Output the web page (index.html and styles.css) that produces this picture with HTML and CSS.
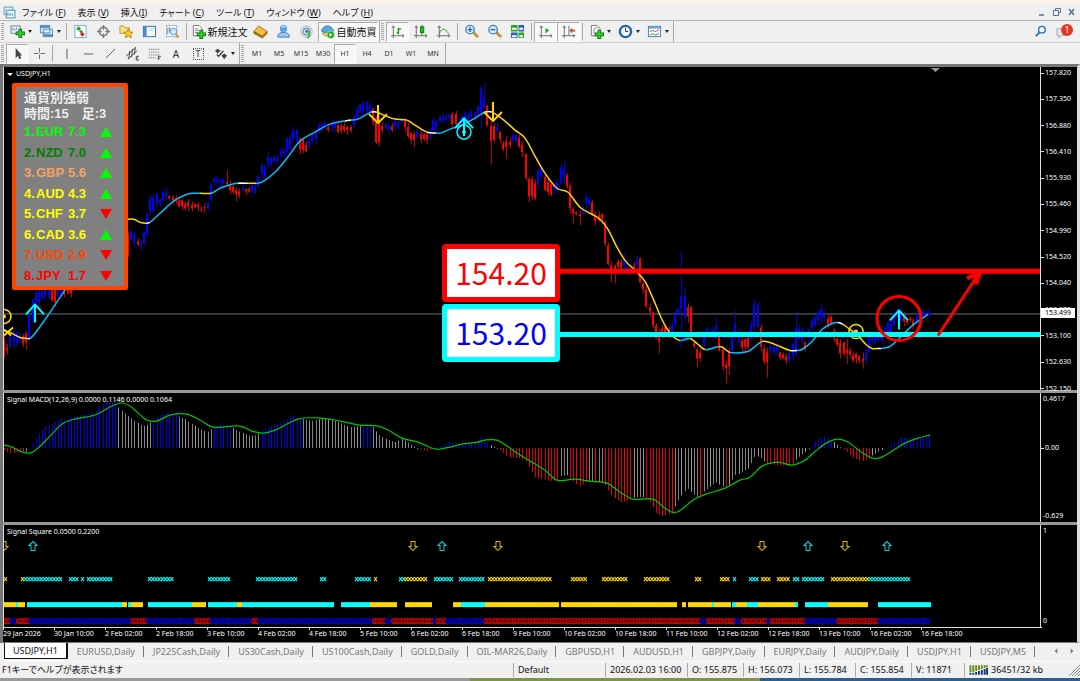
FILE: index.html
```
<!DOCTYPE html>
<html lang="ja">
<head>
    <meta charset="UTF-8">
    <meta name="viewport" content="width=device-width, initial-scale=1.0">
    <link rel="stylesheet" href="styles.css">
    <title>USDJPY,H1</title>
</head>
<body>

    <!-- Menu -->
    <header class="menubar">
        <svg class="app-icon" viewBox="0 0 12 12"><rect x="1" y="1" width="8" height="7" fill="#d8ecf8" stroke="#6fa8cc"/><rect x="3" y="4" width="8" height="7" fill="#eef7fc" stroke="#5b9bc4"/><path d="M4.500 9V6M6.500 9V6.500M8.500 9V7" stroke="#4a8fc0"/></svg>
        <nav class="menu">
            <button>ファイル (<u>F</u>)</button>
            <button>表示 (<u>V</u>)</button>
            <button>挿入(<u>I</u>)</button>
            <button>チャート (<u>C</u>)</button>
            <button>ツール (<u>T</u>)</button>
            <button>ウィンドウ (<u>W</u>)</button>
            <button>ヘルプ (<u>H</u>)</button>
        </nav>
        <div class="window-buttons">
            <button aria-label="Minimize"><svg viewBox="0 0 10 10"><path d="M2 8h5" stroke="#55708c" stroke-width="1.500"/></svg></button>
            <button aria-label="Restore"><svg viewBox="0 0 10 10"><path d="M3.500 3.500v-2h5v4h-2M1.500 3.500h5v5h-5z" fill="none" stroke="#55708c"/></svg></button>
            <button aria-label="Close"><svg viewBox="0 0 10 10"><path d="M2 2l5 6M7 2L2 8" stroke="#55708c" stroke-width="1.500"/></svg></button>
        </div>
    </header>

    <!-- Standard toolbar -->
    <div class="toolbar-row">
        <div class="toolbar standard">
            <i class="grip"></i>
            <button class="tool drop" aria-label="New chart"><svg viewBox="0 0 16 16"><path d="M1 2h10v8H1z" fill="#e6f1f9" stroke="#6285a3"/><path d="M3 7V4M5 7V5M7 6V4" stroke="#6285a3"/><path d="M6 10h10M11 5v10" stroke="#0b7a0b" stroke-width="4"/><path d="M7 10h8M11 6v8" stroke="#35d035" stroke-width="2"/></svg></button>
            <button class="tool drop" aria-label="Profiles"><svg viewBox="0 0 16 16"><path d="M1.500 1.500h10v8h-10zM4.500 5.500h10v8h-10z" fill="#dcebf6" stroke="#4b86b4"/><path d="M1.500 3h10M4.500 12h10" stroke="#4b86b4" stroke-width="2"/></svg></button>
            <i class="sep"></i>
            <button class="tool" aria-label="Market watch"><svg viewBox="0 0 16 16"><rect x="2" y="1.500" width="12" height="13" fill="#fff" stroke="#6faede"/><path d="M3.500 5l2.500-2.500 2.500 2.500-2.500 2.500z" fill="#17a317"/><path d="M6.500 8l2-2 2 2-2 2z" fill="#17a317"/><path d="M7.500 11l2.500-2.500 2.500 2.500-2.500 2.500z" fill="#e02020"/></svg></button>
            <button class="tool" aria-label="Data window"><svg viewBox="0 0 16 16"><circle cx="8" cy="8" r="4.500" fill="none" stroke="#777" stroke-width="1.500"/><path d="M8 1v5M8 10v5M1 8h5M10 8h5" stroke="#777" stroke-width="1.500"/></svg></button>
            <button class="tool" aria-label="Navigator"><svg viewBox="0 0 16 16"><path d="M1 2h4l1 2h5v6H1z" fill="#f8e08a" stroke="#c69a2e"/><path d="M10 5l1.500 3.500 3.500.3-2.700 2.400.9 3.600-3.200-2-3.200 2 .9-3.600L5 8.800l3.500-.3z" fill="#ffc928" stroke="#b98112"/></svg></button>
            <button class="tool" aria-label="Terminal"><svg viewBox="0 0 16 16"><rect x="1.500" y="2.500" width="13" height="11" fill="#f4fafe" stroke="#2f6ea5"/><path d="M2 3h3v10H2z" fill="#4a8fc9"/><path d="M7 5h6M7 7h5" stroke="#b8d4ea"/></svg></button>
            <button class="tool" aria-label="Strategy tester"><svg viewBox="0 0 16 16"><rect x="1.500" y="1.500" width="11" height="12" fill="#fff" stroke="#9ab4ca"/><path d="M3 4v7M5 3v6" stroke="#4b7da8"/><circle cx="9" cy="8" r="3.500" fill="#cfe7f8" stroke="#5592c4"/><path d="M11.500 11l3 3.500" stroke="#c99322" stroke-width="2"/></svg></button>
            <i class="sep"></i>
            <button class="tool text"><svg viewBox="0 0 16 16"><path d="M2.500 1.500h6l3 3v8h-9z" fill="#fff" stroke="#777"/><path d="M4 5h4M4 7h5M4 9h3" stroke="#888"/><path d="M6 11h10M11 6v10" stroke="#0b7a0b" stroke-width="4"/><path d="M7 11h8M11 7v8" stroke="#35d035" stroke-width="2"/></svg>新規注文</button>
            <button class="tool" aria-label="MetaEditor"><svg viewBox="0 0 16 16"><path d="M1 8l5-6 9 6-5 6z" fill="#f2c148" stroke="#a87213"/><path d="M1 8v2l9 5 5-5V8l-5 5z" fill="#c98a1d" stroke="#8c5c0c"/></svg></button>
            <button class="tool" aria-label="Options"><svg viewBox="0 0 16 16"><circle cx="8" cy="5" r="3.500" fill="#d5eafa" stroke="#4c8ed0"/><path d="M2 12c1-4 11-4 12 0v2H2z" fill="#9cc8ec" stroke="#3579bd"/><path d="M5 3.500h6v4H5z" fill="#5ea3e0"/></svg></button>
            <button class="tool" aria-label="Signals"><svg viewBox="0 0 16 16"><circle cx="8" cy="8" r="6" fill="#e4eef4" stroke="#9bb4c4"/><circle cx="8" cy="8" r="3.500" fill="none" stroke="#6c9cc0" stroke-width="1.500"/><path d="M8 7c4 1 4 6 1 8" fill="none" stroke="#4caf3e" stroke-width="2"/><circle cx="8" cy="8" r="1.500" fill="#4673a0"/></svg></button>
            <button class="tool text on"><svg viewBox="0 0 16 16"><path d="M3 7h10v4l-4 3-6-3z" fill="#f3cf63" stroke="#b98a22"/><path d="M1 7c2-1 2-5 7-5s5 4 7 5c-3 3-11 3-14 0z" fill="#56a9dc" stroke="#3679a8"/><circle cx="11.500" cy="11.500" r="4" fill="#18ad18" stroke="#fff" stroke-width=".5"/><path d="M10 9.500v4l3.500-2z" fill="#fff"/></svg>自動売買</button>
        </div>
        <div class="toolbar standard">
            <i class="grip"></i>
            <button class="tool on" aria-label="Bar chart"><svg viewBox="0 0 16 16"><path d="M3.500 2v13M1 12.500h14M2 4l1.500-2L5 4M13 11l2 1.500-2 1.500" fill="none" stroke="#666"/><path d="M9 11V4M7 9.500h2M9 5.500h3" stroke="#159915" stroke-width="1.500" fill="none"/></svg></button>
            <button class="tool" aria-label="Candlesticks"><svg viewBox="0 0 16 16"><path d="M3.500 2v13M1 12.500h14M2 4l1.500-2L5 4M13 11l2 1.500-2 1.500" fill="none" stroke="#666"/><path d="M9.500 1v11" stroke="#087808"/><rect x="8" y="3" width="3.500" height="6" fill="#20c020" stroke="#087808"/></svg></button>
            <button class="tool" aria-label="Line chart"><svg viewBox="0 0 16 16"><path d="M3.500 2v13M1 12.500h14M2 4l1.500-2L5 4M13 11l2 1.500-2 1.500" fill="none" stroke="#666"/><path d="M3.500 10c3-6 5-6 10 0" fill="none" stroke="#159915"/></svg></button>
            <i class="sep"></i>
            <button class="tool" aria-label="Zoom in"><svg viewBox="0 0 16 16"><path d="M10 9l5 5" stroke="#c7932b" stroke-width="3"/><circle cx="6.500" cy="6" r="4.500" fill="#d8edfb" stroke="#4185bd" stroke-width="1.500"/><path d="M4 6h5M6.500 3.500v5" stroke="#2667a5" stroke-width="1.500"/></svg></button>
            <button class="tool" aria-label="Zoom out"><svg viewBox="0 0 16 16"><path d="M10 9l5 5" stroke="#c7932b" stroke-width="3"/><circle cx="6.500" cy="6" r="4.500" fill="#d8edfb" stroke="#4185bd" stroke-width="1.500"/><path d="M4 6h5" stroke="#2667a5" stroke-width="1.500"/></svg></button>
            <button class="tool" aria-label="Tile windows"><svg viewBox="0 0 16 16"><path d="M1 1h7v7H1zM9 9h6v6H9z" fill="#2aa51d"/><path d="M9 1h6v7H9zM1 9h7v6H1z" fill="#2c5fc4"/><path d="M2 4h5v2H2zM10 4h4v2h-4zM2 12h5v2H2zM10 12h4v2h-4z" fill="#fff"/></svg></button>
            <i class="sep"></i>
            <button class="tool on" aria-label="Auto scroll"><svg viewBox="0 0 16 16"><path d="M3.500 2v13M1 12.500h14M2 4l1.500-2L5 4M13 11l2 1.500-2 1.500" fill="none" stroke="#666"/><path d="M8 4v6l4-3z" fill="#1fae1f"/></svg></button>
            <button class="tool on" aria-label="Chart shift"><svg viewBox="0 0 16 16"><path d="M3.500 2v13M1 12.500h14M2 4l1.500-2L5 4M13 11l2 1.500-2 1.500" fill="none" stroke="#666"/><path d="M8.500 2v10" stroke="#3a6da0"/><path d="M9 7l3-3v2h3v2h-3v2z" fill="#d2491e"/></svg></button>
            <i class="sep"></i>
            <button class="tool drop" aria-label="Indicators"><svg viewBox="0 0 16 16"><path d="M2.500 1.500h6l3 3v8h-9z" fill="#fff" stroke="#777"/><path d="M5 10c0-6 1-6 4-6" fill="none" stroke="#777"/><path d="M6 11h10M11 6v10" stroke="#0b7a0b" stroke-width="4"/><path d="M7 11h8M11 7v8" stroke="#35d035" stroke-width="2"/></svg></button>
            <button class="tool drop" aria-label="Periods"><svg viewBox="0 0 16 16"><circle cx="8" cy="8" r="6" fill="#f4faff" stroke="#1e64b4" stroke-width="2.500"/><path d="M8 4v4h3" fill="none" stroke="#333"/></svg></button>
            <button class="tool drop" aria-label="Templates"><svg viewBox="0 0 16 16"><rect x="1.500" y="2.500" width="13" height="11" fill="#fff" stroke="#3d80b5"/><path d="M2 4h12" stroke="#6aaede" stroke-width="2"/><path d="M3 8l3-1 3 1 4-2" fill="none" stroke="#c0522a"/><path d="M3 12l3-2 3 2 4-2" fill="none" stroke="#23962b"/></svg></button>
        </div>
        <div class="right-tools">
            <button class="tool" aria-label="Search"><svg viewBox="0 0 16 16"><circle cx="9.500" cy="6" r="3.500" fill="#fff" stroke="#2b70b5" stroke-width="1.500"/><path d="M7 9l-4 4" stroke="#2b70b5" stroke-width="2"/></svg></button>
            <button class="tool notice" aria-label="Messages"><svg viewBox="0 0 16 16"><path d="M2 5h11v7H7l-3 3v-3H2z" fill="#e6e6e6" stroke="#aaa"/></svg><span class="badge">1</span></button>
        </div>
    </div>

    <!-- Line studies and periods -->
    <div class="toolbar-row">
        <div class="toolbar">
            <i class="grip"></i>
            <button class="tool on" aria-label="Cursor"><svg viewBox="0 0 16 16"><path d="M6 2v11l2.500-2.500L10 14l2-1-1.500-3H13z" fill="#444"/></svg></button>
            <button class="tool" aria-label="Crosshair"><svg viewBox="0 0 16 16"><path d="M8 2v5M8 9v5M2 8h5M9 8h5" stroke="#666"/></svg></button>
            <i class="sep"></i>
            <button class="tool" aria-label="Vertical line"><svg viewBox="0 0 16 16"><path d="M8.500 3v11" stroke="#555"/></svg></button>
            <button class="tool" aria-label="Horizontal line"><svg viewBox="0 0 16 16"><path d="M3 8.500h10" stroke="#555"/></svg></button>
            <button class="tool" aria-label="Trendline"><svg viewBox="0 0 16 16"><path d="M3 13L13 3" stroke="#555"/></svg></button>
            <button class="tool" aria-label="Channel"><svg viewBox="0 0 16 16"><path d="M1 11L11 2M3 14L13 5M5 5l-1 9M8 3l-1 9M11 1l-1 8" stroke="#444"/><path d="M15 11h-3v4h3M12 13h2" fill="none" stroke="#444"/></svg></button>
            <button class="tool" aria-label="Fibonacci"><svg viewBox="0 0 16 16"><path d="M2 3.500h12M2 6.500h12M2 9.500h12M2 12.500h8" stroke="#555" stroke-dasharray="1 1"/><path d="M12 15v-4h3M12 13h2" fill="none" stroke="#444"/></svg></button>
            <button class="tool letter">A</button>
            <button class="tool letter"><span class="boxed">T</span></button>
            <button class="tool drop" aria-label="Arrows"><svg viewBox="0 0 16 16"><path d="M2 5l3-2 3 2-3 3zM9 10l3-2 3 2-3 4z" fill="#444"/><path d="M4 9l2 2 5-6" fill="none" stroke="#444" stroke-width="1.500"/></svg></button>
        </div>
        <div class="toolbar periods">
            <i class="grip"></i>
            <button class="tool">M1</button>
            <button class="tool">M5</button>
            <button class="tool">M15</button>
            <button class="tool">M30</button>
            <button class="tool on">H1</button>
            <button class="tool">H4</button>
            <button class="tool">D1</button>
            <button class="tool">W1</button>
            <button class="tool">MN</button>
        </div>
    </div>

    <!-- Chart window -->
    <main class="chart">
        <section class="pane price">
            <div class="plot">
                <h1 class="pane-title"><i class="down"></i>USDJPY,H1</h1>
                <svg id="price" viewBox="4 67 1036 322" preserveAspectRatio="none"></svg>
                <div class="strength">
                    <p>通貨別強弱</p>
                    <p>時間:15　足:3</p>
                    <ol>
                        <li class="lime"><span>1.</span><span>EUR</span><span>7.3</span><i class="tri up"></i></li>
                        <li class="green"><span>2.</span><span>NZD</span><span>7.0</span><i class="tri up"></i></li>
                        <li class="sandy"><span>3.</span><span>GBP</span><span>5.6</span><i class="tri up"></i></li>
                        <li class="yellow"><span>4.</span><span>AUD</span><span>4.3</span><i class="tri up"></i></li>
                        <li class="yellow"><span>5.</span><span>CHF</span><span>3.7</span><i class="tri"></i></li>
                        <li class="yellow"><span>6.</span><span>CAD</span><span>3.6</span><i class="tri up"></i></li>
                        <li class="orange"><span>7.</span><span>USD</span><span>2.9</span><i class="tri"></i></li>
                        <li class="red"><span>8.</span><span>JPY</span><span>1.7</span><i class="tri"></i></li>
                    </ol>
                </div>
                <div class="levels">
                    <div class="level target">154.20</div>
                    <div class="level base">153.20</div>
                </div>
            </div>
            <div class="scale">
                <span>157.820</span><span>157.350</span><span>156.880</span><span>156.410</span><span>155.930</span><span>155.460</span><span>154.990</span><span>154.520</span><span>154.040</span><span>153.570</span><span>153.100</span><span>152.630</span><span>152.150</span>
                <b class="current">153.499</b>
            </div>
        </section>
        <section class="pane macd">
            <div class="plot">
                <h2 class="pane-title">Signal MACD(12,26,9) 0.0000 0.1146 0.0000 0.1064</h2>
                <svg id="macd" viewBox="4 392 1036 129" preserveAspectRatio="none"></svg>
            </div>
            <div class="scale"><span>0.4617</span><span class="zero">0.00</span><span>-0.629</span></div>
        </section>
        <section class="pane square">
            <div class="plot">
                <h2 class="pane-title">Signal Square 0.0500 0.2200</h2>
                <svg id="square" viewBox="4 524 1036 102" preserveAspectRatio="none"></svg>
            </div>
            <div class="scale"><span>1</span><span>0</span></div>
        </section>
        <ol class="dates">
            <li>29 Jan 2026</li><li>30 Jan 10:00</li><li>2 Feb 02:00</li><li>2 Feb 18:00</li><li>3 Feb 10:00</li><li>4 Feb 02:00</li><li>4 Feb 18:00</li><li>5 Feb 10:00</li><li>6 Feb 02:00</li><li>6 Feb 18:00</li><li>9 Feb 10:00</li><li>10 Feb 02:00</li><li>10 Feb 18:00</li><li>11 Feb 10:00</li><li>12 Feb 02:00</li><li>12 Feb 18:00</li><li>13 Feb 10:00</li><li>16 Feb 02:00</li><li>16 Feb 18:00</li>
        </ol>
    </main>

    <nav class="tabs">
        <a href="#" class="active">USDJPY,H1</a>
        <a href="#">EURUSD,Daily</a>
        <a href="#">JP225Cash,Daily</a>
        <a href="#">US30Cash,Daily</a>
        <a href="#">US100Cash,Daily</a>
        <a href="#">GOLD,Daily</a>
        <a href="#">OIL-MAR26,Daily</a>
        <a href="#">GBPUSD,H1</a>
        <a href="#">AUDUSD,H1</a>
        <a href="#">GBPJPY,Daily</a>
        <a href="#">EURJPY,Daily</a>
        <a href="#">AUDJPY,Daily</a>
        <a href="#">USDJPY,H1</a>
        <a href="#">USDJPY,M5</a>
        <span class="tab-scroll">
            <button aria-label="Previous tabs"><svg viewBox="0 0 6 6"><path d="M4 1v4L2 3z" fill="#777"/></svg></button>
            <button aria-label="Next tabs"><svg viewBox="0 0 6 6"><path d="M2 1v4l2-2z" fill="#777"/></svg></button>
        </span>
    </nav>

    <footer class="status">
        <span class="help">F1キーでヘルプが表示されます</span>
        <span class="profile">Default</span>
        <span class="time">2026.02.03 16:00</span>
        <span class="ohlc">O: 155.875</span>
        <span class="ohlc">H: 156.073</span>
        <span class="ohlc">L: 155.784</span>
        <span class="ohlc">C: 155.854</span>
        <span class="volume">V: 11871</span>
        <span class="traffic">
            <svg viewBox="0 0 20 12"><path d="M1.500 1v7M4.500 1v7M7.500 1v6M10.500 1v5M13.500 1v4M16.500 1v3M19 1v2" stroke="#6d8b1c" stroke-width="2"/><path d="M1.500 9v2M4.500 9v2M7.500 8v3M10.500 7v4M13.500 6v5M16.500 5v6M19 4v7" stroke="#123a6b" stroke-width="2"/></svg>
            36451/32 kb
        </span>
        <svg class="resize" viewBox="0 0 12 12"><path d="M1 12L12 1M4 12l8-8M7 12l5-5M10 12l2-2" stroke="#888"/></svg>
    </footer>
    <div class="desktop"></div>

    <script src="chart.js"></script>
</body>
</html>
```
FILE: styles.css
```
* {
    box-sizing: border-box;
}

body {
    margin: 0;
    height: 100vh;
    display: flex;
    flex-direction: column;
    overflow: hidden;
    background-color: #f0f0f0;
    border-top: 4px solid #f7f3ea;
    font-family: "Noto Sans", "Noto Sans CJK JP", sans-serif;
    font-size: 9px;
    color: #111;
}

button {
    font: inherit;
    color: inherit;
    background: none;
    border: 0;
    padding: 0;
    margin: 0;
}

ol, p, h1, h2 {
    margin: 0;
    padding: 0;
    list-style: none;
}

/* Menu */
.menubar {
    display: flex;
    align-items: center;
    height: 17px;
    padding: 0 3px;
    border-bottom: 1px solid #b4b4b4;
}

.app-icon {
    width: 13px;
    height: 13px;
    margin-right: 6px;
}

.menu {
    display: flex;
    gap: 12px;
    font-feature-settings: "palt";
    white-space: nowrap;
}

.window-buttons {
    display: flex;
    gap: 5px;
    margin-left: auto;
}

.window-buttons svg {
    display: block;
    width: 10px;
    height: 10px;
}

/* Toolbars */
.toolbar-row {
    display: flex;
    height: 22px;
    border-bottom: 1px solid #cfcfcf;
}

.toolbar-row + .toolbar-row {
    height: 21px;
    border-bottom: 0;
}

.toolbar {
    display: flex;
    align-items: center;
    border-right: 1px solid #a8a8a8;
    padding-right: 1px;
}

.grip {
    width: 3px;
    height: 17px;
    margin: 0 2px 0 1px;
    background: repeating-linear-gradient(#a8a8a8 0 1px, #f0f0f0 1px 2px);
}

.sep {
    width: 1px;
    height: 17px;
    margin: 0 2px;
    background-color: #a8a8a8;
}

.tool {
    display: flex;
    align-items: center;
    justify-content: center;
    width: 22px;
    height: 20px;
    white-space: nowrap;
}

.standard .tool {
    width: 23px;
}

.tool svg {
    width: 15px;
    height: 15px;
    flex: none;
}

.tool.drop,
.standard .tool.drop {
    width: 29px;
    gap: 3px;
}

.tool.drop::after {
    content: "";
    border: 2px solid transparent;
    border-top: 3px solid #222;
    border-bottom: 0;
}

.standard .tool.text {
    width: 60px;
    gap: 2px;
    font-size: 10px;
}

.tool.on {
    background-color: #f8f8f8;
    border: 1px solid #fff;
    border-top-color: #aaa;
    border-left-color: #aaa;
}

.letter {
    font-size: 10px;
    color: #333;
}

.boxed {
    width: 11px;
    line-height: 10px;
    border: 1px dotted #555;
    font-size: 9px;
}

.periods {
    font-size: 7px;
    color: #333;
}

.right-tools {
    display: flex;
    align-items: center;
    margin-left: auto;
    padding-right: 7px;
}

.notice {
    position: relative;
}

.badge {
    position: absolute;
    top: 2px;
    right: 0;
    width: 12px;
    height: 12px;
    border-radius: 50%;
    background-color: #dc3a22;
    color: #fff;
    line-height: 12px;
    text-align: center;
}

/* Chart window */
.chart {
    flex: 1;
    min-height: 0;
    display: flex;
    flex-direction: column;
    background-color: #000;
    border: 3px solid #777;
    border-right-color: #ddd;
    border-bottom-width: 1px;
    color: #fff;
    font-size: 7px;
    line-height: 12px;
}

.pane {
    display: flex;
    min-height: 0;
}

.price {
    flex: 322 1 0;
}

.macd {
    flex: 129 1 0;
    border-top: 3px solid #999;
}

.square {
    flex: 102 1 0;
    border-top: 3px solid #999;
}

.plot {
    position: relative;
    flex: 1;
    min-width: 0;
    border-left: 1px solid #ddd;
    border-right: 1px solid #ddd;
}

.plot svg {
    display: block;
    width: 100%;
    height: 100%;
}

.pane-title {
    position: absolute;
    top: 1px;
    left: 3px;
    font-size: 7px;
    font-weight: 400;
    white-space: nowrap;
}

.down {
    display: inline-block;
    margin-right: 3px;
    border: 3px solid transparent;
    border-top: 3px solid #fff;
    border-bottom: 0;
    vertical-align: middle;
}

.scale {
    position: relative;
    flex: none;
    width: 36px;
    display: flex;
    flex-direction: column;
    justify-content: space-between;
}

.scale span {
    display: flex;
    align-items: center;
    gap: 1px;
}

.price .scale span::before,
.scale .zero::before {
    content: "";
    width: 3px;
    height: 1px;
    background-color: #ddd;
}

.price .scale {
    margin-bottom: -5px;
}

.macd .scale span:not(.zero),
.square .scale span {
    padding-left: 2px;
}

.macd .scale .zero {
    margin-bottom: 18px;
}

.current {
    position: absolute;
    top: 241px;
    left: 0;
    width: 34px;
    line-height: 10px;
    padding-left: 4px;
    background-color: #fff;
    color: #000;
    font-weight: 400;
}

.dates {
    display: flex;
    height: 15px;
    margin-right: 35px;
    padding-right: 70px;
    border-top: 1px solid #ddd;
}

.dates li {
    flex: 1 1 0;
    width: 0;
    white-space: nowrap;
    background: linear-gradient(#ddd, #ddd) no-repeat 0 0 / 1px 2px;
}

/* Currency strength panel */
.strength {
    position: absolute;
    top: 16px;
    left: 8px;
    width: 116px;
    padding: 3px 4px 0 8px;
    border: 4px solid #ff4500;
    border-radius: 2px;
    background-color: #808080;
    font: bold 13px/20px "Liberation Sans", "Noto Sans CJK JP", sans-serif;
}

.strength p {
    color: #eee;
    line-height: 16px;
    white-space: nowrap;
}

.strength ol {
    display: flex;
    flex-direction: column;
    height: 164px;
}

.strength li {
    flex: 1;
    display: grid;
    grid-template-columns: 12px 32px 32px 12px;
    align-items: center;
}

.tri {
    border: 6px solid transparent;
    border-top: 10px solid #f00;
    border-bottom: 0;
}

.tri.up {
    border-top: 0;
    border-bottom: 10px solid #0f0;
}

.lime { color: #0f0; }
.green { color: #008000; }
.sandy { color: #f4a460; }
.yellow { color: #ff0; }
.orange { color: #ff4500; }
.red { color: #f00; }

/* Price levels */
.levels {
    position: absolute;
    top: 177px;
    left: 438px;
    display: grid;
    gap: 2px;
}

.level {
    width: 118px;
    height: 58px;
    border: 5px solid #f00;
    border-radius: 4px;
    background-color: #fff;
    color: #f00;
    font: 30px/46px "Noto Sans CJK JP", sans-serif;
    text-align: center;
}

.level.base {
    border-color: #0ff;
    color: #00f;
}

/* Chart tabs */
.tabs {
    display: flex;
    align-items: center;
    height: 19px;
    padding: 0 4px 2px;
    border-bottom: 1px solid #fafafa;
    white-space: nowrap;
}

.tabs a {
    padding: 0 8px 0 9px;
    line-height: 11px;
    color: #777;
    text-decoration: none;
    border-right: 1px solid #777;
}

.tabs .active {
    line-height: 15px;
    background-color: #fff;
    color: #111;
    border: 1px solid #111;
    border-top: 0;
    border-right-width: 2px;
    padding: 0 8px;
}

.tab-scroll {
    display: flex;
    gap: 8px;
    margin-left: auto;
}

.tab-scroll svg {
    display: block;
    width: 8px;
    height: 8px;
}

/* Status bar */
.status {
    display: flex;
    align-items: center;
    height: 16px;
    line-height: 14px;
    white-space: nowrap;
}

.status span {
    padding-left: 4px;
    border-left: 1px solid #aaa;
}

.status .help {
    flex: 1;
    padding-left: 2px;
    border-left: 0;
    font-feature-settings: "palt";
}

.status .profile { width: 92px; }
.status .time { width: 82px; }
.status .ohlc { width: 56px; }
.status .volume { width: 53px; }

.status .traffic {
    display: flex;
    align-items: center;
    gap: 3px;
    width: 104px;
}

.traffic svg {
    width: 19px;
    height: 12px;
}

.resize {
    width: 12px;
    height: 12px;
}

.desktop {
    height: 3px;
    background: linear-gradient(90deg, #999 0 470px, #7d9150 470px 760px, #2f5f86 760px);
}
```
FILE: chart.js
```
const NS = "http://www.w3.org/2000/svg";
const BAR = 3.18;
const BLUE = "#0000ff", RED = "#ff0000", GOLD = "#ffd700", AQUA = "#00ffff", GRAY = "#999";

function draw(parent, tag, attrs) {
    const el = document.createElementNS(NS, tag);
    for (const key in attrs) el.setAttribute(key, attrs[key]);
    parent.appendChild(el);
    return el;
}

function line(parent, points, color, width) {
    draw(parent, "path", {
        d: "M" + points.map(p => p.join(" ")).join("L"),
        fill: "none", stroke: color, "stroke-width": width, "stroke-linejoin": "round"
    });
}

// smooth line through all[from..to]
function curve(parent, all, from, to, color, width) {
    let d = `M${all[from][0]} ${all[from][1]}`;
    for (let i = from; i < to; i++) {
        const a = all[Math.max(0, i - 1)], b = all[i], c = all[i + 1], e = all[Math.min(all.length - 1, i + 2)];
        const step = (c[0] - b[0]) / 3;
        const m1 = (c[1] - a[1]) / (c[0] - a[0]);
        const m2 = (e[1] - b[1]) / (e[0] - b[0]);
        d += `C${b[0] + step} ${b[1] + m1 * step} ${c[0] - step} ${c[1] - m2 * step} ${c[0]} ${c[1]}`;
    }
    draw(parent, "path", { d, fill: "none", stroke: color, "stroke-width": width });
}

// x, body top, body bottom, direction, high, low
const candles = [
    [4,340,353,"r",336,357],[7,348,350,"r",343,354],[10,336,346,"b"],[15,331,342,"b"],[20,334,340,"b"],[24,336,343,"r"],[27,333,342,"r",331,349],
    [30,315,337,"b"],[33,300,320,"b"],[37,292,302,"b"],[44,289,295,"b"],[48,290,296,"b"],[52,290,300,"r"],[56,290,302,"r"],[60,288,293,"b"],[64,288,294,"r"],[68,285,293,"r"],
    [75,272,282,"b"],[95,255,265,"b"],[110,240,250,"b"],[120,238,250,"r"],[128,235,254,"r"],[131,231,238,"b"],[135,234,243,"b"],[139,241,244,"r"],[142,243,245,"b"],[145,232,243,"b"],
    [148,214,234,"b"],[152,198,211,"b"],[155,194,202,"b"],[159,200,204,"b"],[163,192,200,"b"],[167,193,196,"b",187,201],[170,196,198,"r"],[175,198,201,"r"],[180,200,206,"r"],
    [188,202,206,"r"],[195,204,207,"r"],[203,207,208,"r"],[207,202,208,"b"],[211,184,200,"b"],[216,179,182,"b"],[221,179,182,"b"],[226,182,184,"r",170,187],[230,184,190,"r"],
    [237,190,194,"r",187,201],[242,188,190,"b"],[248,189,191,"r"],[254,187,191,"b"],[258,176,186,"b"],[263,165,174,"b"],[268,157,163,"b"],[275,157,161,"b"],[283,149,154,"b"],
    [288,139,151,"b"],[293,130,138,"b"],[297,130,141,"b"],[301,139,149,"r"],[305,145,151,"r"],[309,140,145,"b"],[315,133,139,"b"],[320,126,131,"b"],[325,123,127,"b"],
    [329,127,130,"r"],[334,124,128,"b"],[338,125,132,"r"],[344,126,130,"r"],[349,127,130,"r"],[353,117,126,"b"],[358,110,117,"b"],[362,103,111,"b"],[366,103,111,"b"],[370,106,112,"b"],
    [373,109,122,"r"],[376,118,142,"r"],[380,120,142,"r",116,146],[383,126,130,"r"],[388,126,130,"b"],[392,126,130,"r"],[397,122,127,"b"],[401,119,122,"b"],[405,121,127,"r"],
    [409,127,136,"r"],[413,134,140,"r",131,147],[418,132,137,"b"],[423,134,139,"r"],[427,134,139,"r"],[430,131,137,"b"],[435,121,130,"b"],[439,117,121,"b"],[445,117,120,"b"],[450,115,118,"b"],
    [454,114,124,"r"],[458,122,128,"b"],[462,116,122,"b"],[467,115,119,"b"],[473,113,116,"b"],[477,107,113,"b"],[480,89,112,"b",86,128],[483,97,108,"b",83,115],[486,106,125,"r"],[489,126,141,"r",122,164],
    [493,126,140,"r"],[496,127,131,"b"],[500,132,139,"r"],[505,141,147,"r",136,159],[509,142,145,"r"],[513,135,140,"b"],[517,135,141,"b"],[520,138,146,"r"],[524,145,152,"r"],
    [527,154,178,"r"],[530,179,196,"r",177,202],[534,183,198,"r"],[538,170,184,"b"],[541,168,176,"b"],[545,177,190,"r"],[549,182,192,"r"],[553,183,189,"b"],[557,182,190,"b"],[560,168,183,"b"],
    [563,167,176,"b",159,183],[567,175,186,"r"],[570,186,208,"r"],[573,209,213,"r",207,223],[579,214,216,"r",210,225],[583,208,213,"b"],[588,198,204,"b"],[591,202,214,"r"],[595,214,221,"r"],[600,215,220,"r"],
    [605,222,243,"r"],[608,245,264,"r"],[611,265,272,"r",261,282],[615,266,273,"r",264,283],[620,262,267,"r"],[624,258,266,"b",253,270],[628,266,269,"b"],[634,265,267,"r"],[637,259,265,"b"],
    [640,258,282,"r"],[643,283,289,"r"],[646,289,306,"r"],[650,307,311,"r"],[653,312,325,"r"],[657,325,338,"r"],[660,331,341,"r",328,353],[664,326,332,"r"],[668,328,334,"r"],[672,324,332,"b"],
    [676,314,323,"b"],[679,308,313,"b"],[681,296,308,"b",250,347],[685,296,317,"b",288,322],[688,307,316,"r",303,322],[690,307,335,"r"],[693,343,346,"r"],[696,349,358,"r",347,367],[700,352,358,"r"],
    [703,333,345,"b"],[707,328,331,"b"],[712,330,334,"b"],[716,326,331,"b",317,337],[720,334,350,"r"],[723,349,366,"r"],[726,364,368,"r",360,383],[729,352,366,"r",348,374],[733,332,350,"b"],
    [736,324,333,"b",310,340],[739,332,342,"b"],[743,340,347,"r",336,352],[747,337,347,"r"],[750,325,338,"b"],[754,304,326,"b",299,330],[757,304,326,"b"],[761,327,346,"r"],[764,348,361,"r"],
    [767,352,362,"r",347,377],[771,346,350,"b"],[776,344,350,"b"],[780,352,357,"r"],[785,356,360,"r"],[789,353,360,"b"],[793,344,355,"b"],[796,328,353,"b",311,357],[801,330,340,"b"],[805,342,349,"r"],
    [809,329,337,"b"],[813,320,327,"b"],[817,311,320,"b"],[821,309,316,"b",303,322],[825,313,318,"b"],[828,318,325,"r"],[834,330,338,"r"],[838,338,344,"r"],[842,342,353,"r"],[846,349,353,"r",338,363],
    [850,350,354,"r"],[855,353,358,"r"],[859,356,360,"r"],[863,358,361,"r",352,368],[866,352,360,"b"],[869,338,351,"b"],[875,338,341,"b"],[880,336,340,"b"],[885,328,336,"b"],[890,323,332,"b"],
    [895,312,325,"b"],[899,309,318,"b"],[903,315,321,"r"],[908,320,322,"r"],[914,321,325,"r"],[918,315,322,"b"],[923,311,315,"b"],[927,312,314,"b"]
];

// moving average, colour from each point on
const average = [
    [4,330,GOLD],[10,332],[20,337],[27,338,"#fff"],[30,338,"#00bfff"],[35,333],[50,312],[65,290],[90,262],[110,225,GOLD],[128,219],[134,219],[140,222],[146,223,"#fff"],[150,222,"#00bfff"],
    [160,213],[175,200],[187,194],[193,193],[200,193,GOLD],[211,193,"#00bfff"],[220,188],[232,184],[238,183,"#fff"],[248,183,GOLD],[256,183,"#00bfff"],[262,182],[275,172],[287,158],[300,141],
    [315,132],[330,124],[345,121,"#fff"],[351,120,"#00bfff"],[358,119],[371,112,"#fff"],[376,112,GOLD],[386,116],[395,119],[407,120],[415,125],[427,132,"#fff"],[436,133,"#00bfff"],[440,133],
    [450,129],[462,125],[475,118],[485,112,"#fff"],[492,112,GOLD],[505,121],[515,130],[525,138],[535,156],[545,173],[557,188],[568,192],[580,207],[592,214],[600,219],[608,229],
    [616,245],[625,260],[635,270],[645,281],[653,298],[661,317],[668,330],[673,336],[680,340,"#00bfff"],[690,338,GOLD],[697,343],[705,349,"#00bfff"],[715,347],[719,346,GOLD],
    [723,347],[730,352,"#00bfff"],[748,351],[755,346],[762,341,GOLD],[770,342],[780,346],[790,350,"#fff"],[797,350,"#00bfff"],[802,349],[812,341],[822,329],[832,323],[838,322,"#fff"],[843,324,GOLD],
    [850,329],[858,335],[866,344],[872,348],[877,348,"#fff"],[881,348,"#00bfff"],[890,346],[898,339],[905,332],[915,323],[928,314]
];

const price = document.getElementById("price");
draw(price, "rect", { x: 4, y: 313, width: 1036, height: 1, fill: "#65717f" });

for (let x = 4, i = 0; x < 930; x += BAR, i++) {
    // nearest known bar gives the shape, its neighbours the drift
    let n = 0;
    candles.forEach((c, k) => { if (Math.abs(c[0] - x) < Math.abs(candles[n][0] - x)) n = k; });
    const c = candles[n];
    const px = Math.round(x);
    const exact = Math.abs(c[0] - x) < 1.7;
    const drift = exact ? 0 : (i * 7) % 5 - 2;
    const color = c[3] === "b" ? BLUE : RED;
    const high = (exact && c[4]) || c[1] - 1 - (i * 5) % 4;
    const low = (exact && c[5]) || c[2] + 1 + (i * 3) % 5;
    draw(price, "rect", { x: px, y: high + drift, width: 1, height: low - high, fill: color, opacity: 0.75 });
    draw(price, "rect", { x: px - 1, y: c[1] + drift, width: 2, height: c[2] - c[1], fill: color });
}

let start = 0;
for (let i = 1; i < average.length; i++) {
    if (average[i][2] || i === average.length - 1) {
        curve(price, average, start, i, average[start][2], 1.5);
        start = i;
    }
}

// signal arrows
[[378, 105, 123], [493, 102, 121]].forEach(([x, top, tip]) => {
    line(price, [[x, top], [x, tip]], GOLD, 2);
    line(price, [[x - 9, tip - 9], [x, tip], [x + 9, tip - 9]], GOLD, 2);
});
[[35, 304, 322], [464, 118, 136], [899, 310, 329]].forEach(([x, tip, end]) => {
    line(price, [[x, end], [x, tip]], AQUA, 2);
    line(price, [[x - 9, tip + 10], [x, tip], [x + 9, tip + 10]], AQUA, 2);
});
line(price, [[4, 335], [13, 327]], GOLD, 2);
line(price, [[4, 329], [11, 335]], GOLD, 2);
[[4, 316, 7, GOLD], [464, 132, 7, AQUA], [856, 331, 7, GOLD]].forEach(([cx, cy, r, color]) => {
    draw(price, "circle", { cx, cy, r, fill: "none", stroke: color, "stroke-width": 1.5 });
    draw(price, "circle", { cx, cy, r: 2, fill: color });
});

// levels and forecast
line(price, [[556, 271], [1040, 271]], RED, 5);
line(price, [[556, 334], [1040, 334]], AQUA, 5);
draw(price, "circle", { cx: 899, cy: 318, r: 22, fill: "none", stroke: RED, "stroke-width": 3 });
line(price, [[938, 335], [979, 273]], RED, 3);
line(price, [[967, 278], [980, 272], [976, 284]], RED, 4);
draw(price, "path", { d: "M931 68h9l-4.500 4z", fill: "#999" });

// histogram: x, end of bar, colour
const histogram = [
    [4,449,RED],[10,452,RED],[18,451,RED],[24,450,RED],[27,451,GRAY],[30,447,BLUE],[33,441,BLUE],[36,437,BLUE],[40,431,BLUE],[45,425,BLUE],[52,423,BLUE],[60,417,BLUE],[66,419,BLUE],[73,415,BLUE],
    [88,413,BLUE],[95,411,BLUE],[101,404,BLUE],[106,401,BLUE],[113,401,BLUE],[116,403,BLUE],[118,406,GRAY],[122,410,GRAY],[128,415,GRAY],[135,420,GRAY],[142,425,GRAY],[147,424,GRAY],
    [151,421,GRAY],[154,417,BLUE],[160,414,BLUE],[168,411,BLUE],[176,412,BLUE],[178,415,GRAY],[185,418,GRAY],[192,423,GRAY],[200,428,GRAY],[207,431,GRAY],[211,428,GRAY],
    [213,426,BLUE],[220,423,BLUE],[230,425,BLUE],[233,427,GRAY],[240,431,GRAY],[250,435,GRAY],[257,434,GRAY],[261,429,BLUE],[267,427,BLUE],[275,423,BLUE],[285,420,BLUE],[293,414,BLUE],
    [299,416,BLUE],[302,418,GRAY],[311,420,GRAY],[320,418,GRAY],[330,418,GRAY],[340,422,GRAY],[350,426,GRAY],[360,425,GRAY],[363,424,BLUE],[366,422,BLUE],[370,424,BLUE],[373,426,GRAY],
    [378,433,GRAY],[386,438,GRAY],[395,441,GRAY],[402,438,GRAY],[410,443,GRAY],[416,447,GRAY],[421,448,RED],[428,450,RED],[432,448,RED],[438,446,BLUE],[449,441,BLUE],[458,443,BLUE],[466,442,BLUE],
    [475,440,BLUE],[481,436,BLUE],[487,440,BLUE],[490,444,GRAY],[496,447,GRAY],[500,449,RED],[508,456,RED],[520,457,RED],[526,461,RED],[535,476,RED],[550,480,RED],[557,479,RED],[560,475,GRAY],
    [567,474,GRAY],[571,479,RED],[580,485,RED],[586,481,RED],[590,480,GRAY],[596,481,RED],[599,481,GRAY],[602,481,GRAY],[605,484,RED],[612,495,RED],[620,501,RED],[631,499,RED],[634,496,GRAY],
    [643,496,GRAY],[646,498,RED],[650,501,RED],[656,512,RED],[663,515,RED],[673,512,RED],[675,505,GRAY],[680,496,GRAY],[687,487,GRAY],[697,496,GRAY],[700,495,RED],[703,491,GRAY],
    [708,487,GRAY],[716,481,GRAY],[722,485,GRAY],[725,487,RED],[728,486,GRAY],[735,474,GRAY],[742,471,GRAY],[749,467,GRAY],[754,456,GRAY],[759,455,GRAY],[764,460,GRAY],[767,463,RED],[780,464,RED],
    [793,464,RED],[796,458,GRAY],[805,451,GRAY],[809,448,GRAY],[811,446,BLUE],[817,438,BLUE],[824,436,BLUE],[830,437,BLUE],[833,440,GRAY],[840,446,GRAY],[846,450,RED],[855,458,RED],
    [864,460,RED],[868,458,RED],[871,455,GRAY],[881,449,GRAY],[887,447,BLUE],[900,437,BLUE],[918,436,BLUE],[930,434,BLUE]
];
const signal = [
    [4,444],[12,446],[20,450],[30,452],[38,447],[50,435],[62,423],[75,418],[95,414],[110,406],[117,403],[122,402],[130,405],[145,418],[150,420],[157,420],[170,414],[187,413],[200,419],[213,426],
    [240,425],[252,430],[263,432],[275,429],[298,418],[320,417],[340,420],[360,424],[378,425],[390,430],[402,437],[418,441],[436,448],[450,446],[462,443],[478,441],[485,439],[497,439],[507,445],
    [520,454],[532,461],[545,469],[557,479],[575,478],[590,480],[607,482],[620,491],[633,498],[653,498],[665,507],[672,511],[679,510],[693,499],[706,493],[725,487],[740,479],[750,476],[762,465],
    [778,461],[792,464],[805,459],[818,448],[828,441],[838,438],[848,441],[860,450],[872,457],[882,456],[895,448],[905,442],[918,437],[930,434]
];

const macd = document.getElementById("macd");
for (let x = 4, i = 0; x < 931; x += BAR, i++) {
    const next = Math.max(1, histogram.findIndex(h => h[0] >= x));
    const a = histogram[next - 1], b = histogram[next];
    const t = (x - a[0]) / (b[0] - a[0]);
    const end = a[1] + (b[1] - a[1]) * t;
    draw(macd, "rect", {
        x: Math.round(x), y: Math.min(447, end), width: 1, height: Math.max(1, Math.abs(end - 447)),
        fill: t < 0.5 ? a[2] : b[2], opacity: i % 3 ? 0.85 : 1
    });
}
curve(macd, signal, 0, signal.length - 1, "#00c800", 1.2);

// square indicator rows
const Y = GOLD, C = AQUA;
const crosses = [
    [4,8,Y],[21,23,Y],[24,62,C],[69,78,C],[81,85,C],[87,113,C],[148,174,C],[208,231,C],[256,298,C],[320,326,C],[355,371,C],[374,377,Y],[399,405,C],[405,428,Y],[434,453,C],[459,485,C],
    [488,552,Y],[571,587,Y],[602,628,Y],[644,670,Y],[695,701,Y],[720,730,Y],[733,736,C],[749,758,C],[761,771,Y],[777,790,Y],[793,799,C],[802,825,C],[831,867,Y],[869,905,C],[907,910,C]
];
const strip = [
    [4,16,Y],[16,18,C],[18,25,Y],[27,122,C],[122,127,Y],[128,131,C],[131,143,Y],[148,192,C],[192,206,Y],[208,237,C],[237,242,Y],[242,334,C],[341,370,C],[370,397,Y],[405,432,Y],
    [453,461,Y],[461,485,C],[485,559,Y],[561,677,Y],[682,686,Y],[688,712,Y],[712,714,C],[714,731,Y],[732,736,C],[736,747,Y],[747,758,C],[758,795,Y],[795,798,C],[805,828,C],[828,868,Y],[878,931,C]
];
const redRings = [[4,12],[16,31],[133,148],[194,211],[251,259],[372,387],[391,434],[438,447],[484,702],[708,736],[741,752],[753,768],[772,806],[836,879]];

const square = document.getElementById("square");
crosses.forEach(([from, to, color]) => {
    for (let x = from; x < to - 1; x += BAR) {
        draw(square, "path", { d: `M${x} 576l3 4M${x + 3} 576l-3 4`, stroke: color });
    }
});
strip.forEach(([from, to, color]) => draw(square, "rect", { x: from, y: 601, width: to - from, height: 5, fill: color }));
for (let x = 6; x < 931; x += BAR) {
    const red = redRings.some(r => x >= r[0] && x < r[1]);
    draw(square, "rect", { x: x - 2, y: 617, width: BAR, height: 6, fill: red ? "#500000" : "#000050" });
    draw(square, "circle", { cx: x, cy: 620, r: 2.5, fill: "none", stroke: red ? RED : BLUE, "stroke-width": 0.9 });
}
[4, 413, 498, 762, 845].forEach(x => draw(square, "path", { d: `M${x - 2} 540.5h4v5h2l-4 4-4-4h2z`, fill: "none", stroke: "#e0b800" }));
[33, 442, 808, 887].forEach(x => draw(square, "path", { d: `M${x - 2} 549.5h4v-5h2l-4-4-4 4h2z`, fill: "none", stroke: "#00d8d8" }));
```
